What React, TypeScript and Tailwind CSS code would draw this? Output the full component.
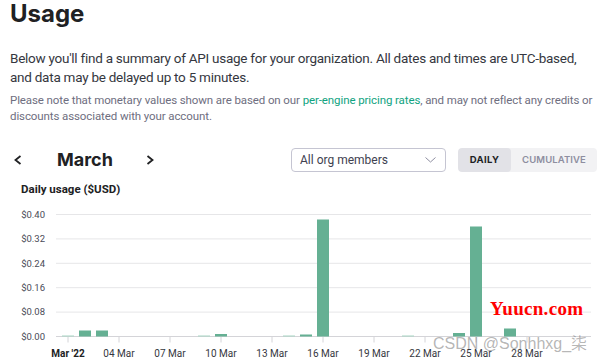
import React from "react";

const bars: { d: number; h: number; light?: boolean }[] = [
  { d: 1, h: 1, light: true },
  { d: 2, h: 6 },
  { d: 3, h: 6 },
  { d: 9, h: 1, light: true },
  { d: 10, h: 2.5 },
  { d: 14, h: 1, light: true },
  { d: 15, h: 2 },
  { d: 16, h: 117 },
  { d: 21, h: 1, light: true },
  { d: 24, h: 3.5 },
  { d: 25, h: 110 },
  { d: 27, h: 8 },
];

const OFF = 197;
const yLabels = ["$0.40", "$0.32", "$0.24", "$0.16", "$0.08", "$0.00"];
const xTicks = [
  { d: 1, label: "Mar '22", bold: true },
  { d: 4, label: "04 Mar" },
  { d: 7, label: "07 Mar" },
  { d: 10, label: "10 Mar" },
  { d: 13, label: "13 Mar" },
  { d: 16, label: "16 Mar" },
  { d: 19, label: "19 Mar" },
  { d: 22, label: "22 Mar" },
  { d: 25, label: "25 Mar" },
  { d: 28, label: "28 Mar" },
];

const cx = (d: number) => 68 + (d - 1) * 17;

function Chart() {
  const base = 336.5 - OFF;
  const step = 24.4;
  return (
    <svg width="600" height="166" className="block -ml-[10px]" style={{ fontFamily: "Roboto, sans-serif" }}>
      {yLabels.map((l, i) => {
        const y = base - (5 - i) * step;
        return (
          <g key={l}>
            <text x="45" y={y + 3.3} textAnchor="end" fontSize="9.5" fill="#4a4b57">
              {l}
            </text>
            <line x1="56" x2="591" y1={y} y2={y} stroke={i === 5 ? "#d4d4d8" : "#e6e6e8"} strokeWidth="1" />
          </g>
        );
      })}
      {xTicks.map((t) => (
        <g key={t.label}>
          <line x1={cx(t.d)} x2={cx(t.d)} y1={base} y2={base + 6} stroke="#d4d4d8" strokeWidth="1" />
          <text
            x={cx(t.d)}
            y={base + 20}
            textAnchor="middle"
            fontSize="10"
            fontWeight={t.bold ? 700 : 400}
            fill={t.bold ? "#202123" : "#353740"}
          >
            {t.label}
          </text>
        </g>
      ))}
      {bars.map((b) => (
        <rect
          key={b.d}
          x={cx(b.d) - 6}
          y={base - b.h}
          width="12"
          height={b.h}
          fill={b.light ? "#a8d5c4" : "#65b093"}
        />
      ))}
    </svg>
  );
}

export default function App() {
  return (
    <div
      className="relative w-[600px] h-[363px] overflow-hidden bg-white pl-[10px] pr-[3px] text-[#353740]"
      style={{ fontFamily: "Roboto, 'Noto Sans', sans-serif" }}
    >
      <h1
        className="text-[24px] leading-[28px] font-bold text-[#202123]"
        style={{ fontFamily: "Inter, sans-serif" }}
      >
        Usage
      </h1>
      <p className="mt-[21px] text-[13.5px] leading-[18.5px] tracking-[-0.25px] text-[#353740] pr-[10px]">
        Below you'll find a summary of API usage for your organization. All dates and times are UTC-based, and data
        may be delayed up to 5 minutes.
      </p>
      <p className="mt-[6px] text-[11.5px] leading-[16px] tracking-[-0.1px] text-[#6e6e80]">
        Please note that monetary values shown are based on our{" "}
        <span className="text-[#10a37f]">per-engine pricing rates</span>, and may not reflect any credits or discounts
        associated with your account.
      </p>
      <div className="mt-[24px] flex items-center h-[24px]">
        <svg width="12" height="12" viewBox="0 0 12 12" className="ml-[2px]">
          <polyline points="8.5,2 3.5,6 8.5,10" fill="none" stroke="#202123" strokeWidth="1.8" />
        </svg>
        <div
          className="ml-[33px] w-[87px] text-[18px] leading-[22px] font-bold text-[#202123]"
          style={{ fontFamily: "Inter, sans-serif" }}
        >
          March
        </div>
        <svg width="12" height="12" viewBox="0 0 12 12">
          <polyline points="3.5,2 8.5,6 3.5,10" fill="none" stroke="#202123" strokeWidth="1.8" />
        </svg>
        <div className="ml-auto flex items-center gap-[12px]">
          <div className="w-[155px] h-[24px] rounded-[4px] border border-[#c5c5d2] flex items-center pl-[8px] pr-[9px] justify-between">
            <span className="text-[12px] text-[#40414f]">All org members</span>
            <svg width="11" height="6" viewBox="0 0 11 6">
              <polyline points="0.5,0.5 5.5,5 10.5,0.5" fill="none" stroke="#8e8ea0" strokeWidth="1" />
            </svg>
          </div>
          <div
            className="w-[139px] h-[24px] rounded-[4px] bg-[#f2f2f4] flex overflow-hidden text-[9.5px]"
            style={{ fontFamily: "Inter, sans-serif" }}
          >
            <div className="w-[53px] bg-[#e2e2e7] rounded-[4px] flex items-center justify-center font-bold tracking-[0.4px] text-[#202123]">
              DAILY
            </div>
            <div className="flex-1 flex items-center justify-center font-semibold tracking-[0.1px] text-[#8e8ea0]">
              CUMULATIVE
            </div>
          </div>
        </div>
      </div>
      <div className="mt-[9px] ml-[11px] text-[11.5px] leading-[16px] font-bold text-[#202123]">Daily usage ($USD)</div>
      <Chart />
      <div
        className="absolute left-[490px] top-[297px] text-[19px] tracking-[0.3px] font-bold text-[#ff0000] leading-[24px]"
        style={{ fontFamily: "'Liberation Serif', serif" }}
      >
        Yuucn.com
      </div>
      <div
        className="absolute left-[433px] top-[333px] text-[16px] leading-[22px] text-[rgba(120,120,120,0.55)]"
        style={{ fontFamily: "'Liberation Sans', 'Noto Sans CJK SC', sans-serif" }}
      >
        CSDN @Sonhhxg_柒
      </div>
    </div>
  );
}
